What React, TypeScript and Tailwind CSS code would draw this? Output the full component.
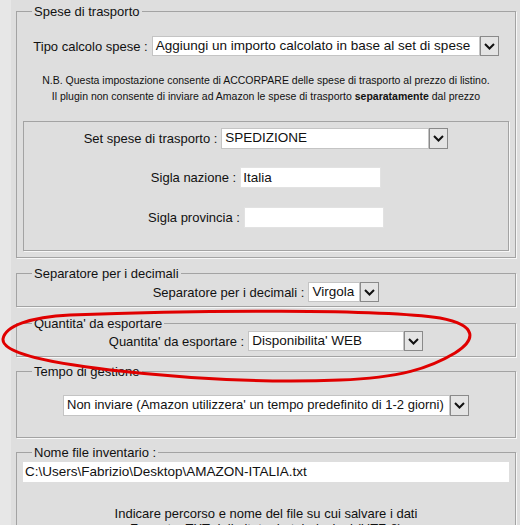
import type { ReactNode } from 'react'

function Chevron() {
  return (
    <svg width="11" height="7" viewBox="0 0 11 7">
      <path d="M1 1l4.5 4.5L10 1" fill="none" stroke="#111" strokeWidth="2" />
    </svg>
  )
}

function Group({ title, className, children }: { title?: string; className: string; children: ReactNode }) {
  return (
    <fieldset className={`border border-[#a3a3a3] shadow-[1px_1px_0_#f7f7f7] ${className}`}>
      {title && <legend className="ml-[15px] px-[2px] text-[13px] leading-[15px]">{title}</legend>}
      {children}
    </fieldset>
  )
}

function Combo({ value, box, h, size = 'text-[13.5px]' }: { value: string; box: string; h: string; size?: string }) {
  return (
    <div className={`flex ${h}`}>
      <div className={`${box} ${size} h-full bg-white border border-[#c4c4c4] pl-[3px] leading-[18px] whitespace-nowrap overflow-hidden`}>
        {value}
      </div>
      <div className="w-[19px] h-full bg-[#e4e4e4] border border-[#8a8a8a] flex items-center justify-center">
        <Chevron />
      </div>
    </div>
  )
}

function Row({ label, className, children }: { label?: string; className: string; children: ReactNode }) {
  return (
    <div className={`flex justify-center items-center gap-[4px] ${className}`}>
      {label && <span className="text-[13px] leading-[15px] whitespace-nowrap">{label}</span>}
      {children}
    </div>
  )
}

export default function App() {
  return (
    <div className="relative w-[520px] h-[525px] overflow-hidden bg-[#dedede] flex font-['Liberation_Sans',Arial,sans-serif] text-[#111]">
      <div className="w-[11px] shrink-0 bg-[#e7e7e7]" />
      <div className="ml-[5px] w-[500px] flex flex-col shrink-0">
        <Group title="Spese di trasporto" className="mt-[4px] pb-[6px]">
          <Row label="Tipo calcolo spese :" className="mt-[17px]">
            <Combo value="Aggiungi un importo calcolato in base al set di spese" box="w-[328px]" h="h-[20px]" />
          </Row>
          <p className="mt-[16px] text-center text-[10.5px] leading-[16px]">
            N.B. Questa impostazione consente di ACCORPARE delle spese di trasporto al prezzo di listino.
            <br />
            Il plugin non consente di inviare ad Amazon le spese di trasporto <b>separatamente</b> dal prezzo
          </p>
          <fieldset className="mt-[17px] mx-[6px] h-[130px] border border-[#a3a3a3] shadow-[1px_1px_0_#f7f7f7]">
            <Row label="Set spese di trasporto :" className="mt-[6px]">
              <Combo value="SPEDIZIONE" box="w-[208px]" h="h-[21px]" />
            </Row>
            <Row label="Sigla nazione :" className="mt-[18px]">
              <div className="w-[141px] h-[21px] bg-white border border-[#e2e2e2] pl-[2px] text-[13.5px] leading-[19px]">Italia</div>
            </Row>
            <Row label="Sigla provincia :" className="mt-[19px]">
              <div className="w-[140px] h-[21px] bg-white border border-[#e2e2e2]" />
            </Row>
          </fieldset>
        </Group>

        <Group title="Separatore per i decimali" className="mt-[8px] pb-[4px]">
          <Row label="Separatore per i decimali :" className="mt-[1px]">
            <Combo value="Virgola" box="w-[52px]" h="h-[20px]" />
          </Row>
        </Group>

        <Group title="Quantita' da esportare" className="mt-[9px] pb-[5px]">
          <Row label="Quantita' da esportare :" className="mt-0">
            <Combo value="Disponibilita' WEB" box="w-[156px]" h="h-[20px]" />
          </Row>
        </Group>

        <Group title="Tempo di gestione" className="mt-[7px] pb-[21px]">
          <Row className="mt-[16px]">
            <Combo
              value="Non inviare (Amazon utilizzera' un tempo predefinito di 1-2 giorni)"
              box="w-[387px]"
              h="h-[21px]"
              size="text-[13px]"
            />
          </Row>
        </Group>

        <Group title="Nome file inventario :" className="mt-[7px] pb-[10px]">
          <div className="mt-[2px] mx-[6px] h-[20px] bg-white pl-[2px] text-[13.5px] leading-[20px] whitespace-nowrap">
            C:\Users\Fabrizio\Desktop\AMAZON-ITALIA.txt
          </div>
          <p className="mt-[24px] text-center text-[13px] leading-[15px]">
            Indicare percorso e nome del file su cui salvare i dati
            <br />
            Formato: TXT delimitato da tabulazioni (UTF-8)
          </p>
        </Group>
      </div>

      <svg className="absolute left-0 top-0 pointer-events-none" width="520" height="525" viewBox="0 0 520 525">
        <path
          d="M 70 315 C 30 317 5 326 3 339 C 2 351 35 361 110 370 C 190 379 270 383 340 380 C 400 378 430 368 455 353 C 476 340 478 325 440 318 C 380 309 200 310 70 315"
          fill="none"
          stroke="#e00000"
          strokeWidth="3"
          strokeLinecap="round"
        />
      </svg>
    </div>
  )
}
